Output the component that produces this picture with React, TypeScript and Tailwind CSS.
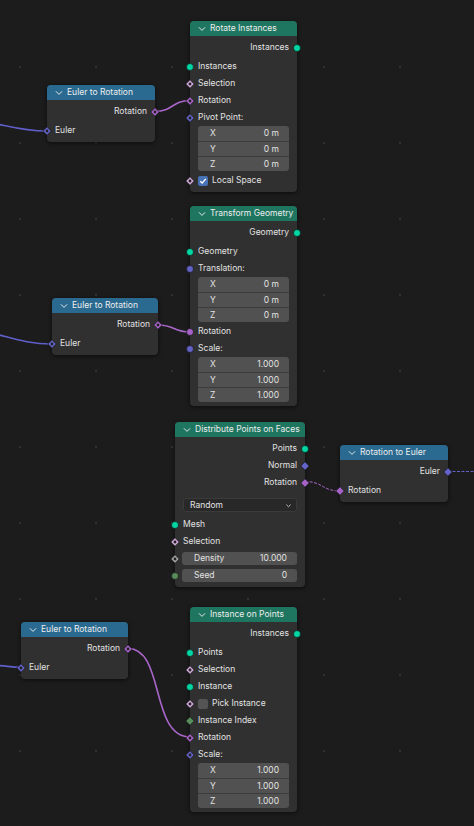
import React from 'react';

type Shape = 'circle' | 'diamond' | 'dot';

const col = {
  geo: '#00d6a3',
  vec: '#6363c7',
  rot: '#a663c7',
  bool: '#cca6d6',
  float: '#a1a1a1',
  int: '#598c5c',
};

function Socket({ color, shape, side }: { color: string; shape: Shape; side: 'in' | 'out' }) {
  const pos = side === 'in' ? '-left-[5px]' : '-right-[5px]';
  return (
    <svg
      width="10"
      height="10"
      viewBox="0 0 10 10"
      className={`absolute top-1/2 -translate-y-1/2 ${pos}`}
    >
      {shape === 'circle' ? (
        <circle cx="5" cy="5" r="3.5" fill={color} stroke="#141414" strokeWidth="0.7" />
      ) : (
        <polygon points="5,0.8 9.2,5 5,9.2 0.8,5" fill={color} stroke="#141414" strokeWidth="0.6" />
      )}
      {shape === 'dot' && <circle cx="5" cy="5" r="1.4" fill="#222" />}
    </svg>
  );
}

function Chevron() {
  return (
    <svg width="8" height="8" viewBox="0 0 8 8" className="shrink-0">
      <polyline points="1.2,2.6 4,5.4 6.8,2.6" fill="none" stroke="#e6e6e6" strokeWidth="1" strokeLinecap="round" />
    </svg>
  );
}

function Node({
  pos,
  title,
  head,
  children,
}: {
  pos: string;
  title: string;
  head: 'geo' | 'conv';
  children: React.ReactNode;
}) {
  const hc = head === 'geo' ? 'bg-[#1e7660]' : 'bg-[#2a6a90]';
  return (
    <div className={`absolute rounded-[4px] bg-[#303030] shadow-[0_1px_4px_rgba(0,0,0,0.6)] ${pos}`}>
      <div className={`flex h-[15px] items-center gap-[4px] rounded-t-[4px] pl-[8px] text-[#ededed] ${hc}`}>
        <Chevron />
        <span className="whitespace-nowrap">{title}</span>
      </div>
      <div className="flex flex-col pt-[3px] pb-[3px]">{children}</div>
    </div>
  );
}

function Out({ label, color, shape }: { label: string; color: string; shape: Shape }) {
  return (
    <div className="relative flex h-[17px] items-center justify-end pr-[8px]">
      <span>{label}</span>
      <Socket color={color} shape={shape} side="out" />
    </div>
  );
}

function In({
  label,
  color,
  shape,
  children,
}: {
  label?: string;
  color: string;
  shape: Shape;
  children?: React.ReactNode;
}) {
  return (
    <div className="relative flex h-[17px] items-center pl-[8px]">
      {children ?? <span>{label}</span>}
      <Socket color={color} shape={shape} side="in" />
    </div>
  );
}

function Gap() {
  return <div className="h-[2px]" />;
}

function Vec({ vals }: { vals: string[] }) {
  const names = ['X', 'Y', 'Z'];
  return (
    <div className="mx-[8px] mb-[1px] flex flex-col overflow-hidden rounded-[3px]">
      {vals.map((v, i) => (
        <div
          key={i}
          className={`flex h-[15px] items-center justify-between bg-[#515151] pr-[10px] pl-[12px] ${
            i > 0 ? 'border-t border-[#3b3b3b]' : ''
          }`}
        >
          <span>{names[i]}</span>
          <span>{v}</span>
        </div>
      ))}
    </div>
  );
}

function Field({ label, value }: { label: string; value: string }) {
  return (
    <div className="-ml-[1px] mr-[8px] flex h-[13px] flex-1 items-center justify-between rounded-[3px] bg-[#515151] pr-[10px] pl-[12px]">
      <span>{label}</span>
      <span>{value}</span>
    </div>
  );
}

function Check({ on, label }: { on: boolean; label: string }) {
  return (
    <div className="flex items-center gap-[4px]">
      <div
        className={`flex h-[10px] w-[10px] items-center justify-center rounded-[2px] ${
          on ? 'bg-[#4772b3]' : 'bg-[#545454]'
        }`}
      >
        {on && (
          <svg width="8" height="8" viewBox="0 0 8 8">
            <polyline points="1.3,4.2 3.2,6 6.8,1.8" fill="none" stroke="#fff" strokeWidth="1.3" />
          </svg>
        )}
      </div>
      <span>{label}</span>
    </div>
  );
}

function EulerToRot({ pos }: { pos: string }) {
  return (
    <Node pos={pos} title="Euler to Rotation" head="conv">
      <Out label="Rotation" color={col.rot} shape="dot" />
      <Gap />
      <In label="Euler" color={col.vec} shape="dot" />
    </Node>
  );
}

export default function App() {
  return (
    <div
      className="relative h-[826px] w-[474px] overflow-hidden bg-[#1c1c1c] bg-[radial-gradient(circle,#303030_1.1px,transparent_1.6px)] bg-[length:76px_76px] bg-[position:-18px_29px] text-[8.5px] leading-none text-[#e2e2e2]"
      style={{ fontFamily: 'Inter, "DejaVu Sans", sans-serif' }}
    >
      <svg className="absolute inset-0" width="474" height="826" fill="none">
        <path d="M-40 119 C 0 121, 12 131, 47 131" stroke="#5f5fcb" strokeWidth="1.6" />
        <path d="M155 111.5 C 173 111.5, 172 100.5, 190 100.5" stroke="#a866c9" strokeWidth="1.6" />
        <path d="M-40 328 C 0 331, 16 344, 52 344" stroke="#5f5fcb" strokeWidth="1.6" />
        <path d="M158 325 C 175 325, 173 332, 190 332" stroke="#a866c9" strokeWidth="1.6" />
        <path d="M305 481.5 C 323 481.5, 322 491, 340 491" stroke="#a866c9" strokeWidth="1" strokeDasharray="3 1.5" />
        <path d="M448 471.5 L 480 471.5" stroke="#6363c7" strokeWidth="1" strokeDasharray="3 1.5" />
        <path d="M-10 665 C 6 665.5, 10 667.3, 21 667.3" stroke="#5f5fcb" strokeWidth="1.6" />
        <path d="M128 648.5 C 165 648.5, 150 737, 190 737" stroke="#a866c9" strokeWidth="1.6" />
      </svg>

      <EulerToRot pos="left-[47px] top-[85px] w-[108px]" />

      <Node pos="left-[190px] top-[21px] w-[107px]" title="Rotate Instances" head="geo">
        <Out label="Instances" color={col.geo} shape="circle" />
        <Gap />
        <In label="Instances" color={col.geo} shape="circle" />
        <In label="Selection" color={col.bool} shape="dot" />
        <In label="Rotation" color={col.rot} shape="dot" />
        <In label="Pivot Point:" color={col.vec} shape="dot" />
        <Vec vals={['0 m', '0 m', '0 m']} />
        <In color={col.bool} shape="dot">
          <Check on label="Local Space" />
        </In>
      </Node>

      <EulerToRot pos="left-[52px] top-[298px] w-[106px]" />

      <Node pos="left-[190px] top-[206px] w-[107px]" title="Transform Geometry" head="geo">
        <Out label="Geometry" color={col.geo} shape="circle" />
        <Gap />
        <In label="Geometry" color={col.geo} shape="circle" />
        <In label="Translation:" color={col.vec} shape="circle" />
        <Vec vals={['0 m', '0 m', '0 m']} />
        <In label="Rotation" color={col.rot} shape="circle" />
        <In label="Scale:" color={col.vec} shape="circle" />
        <Vec vals={['1.000', '1.000', '1.000']} />
      </Node>

      <Node pos="left-[175px] top-[422px] w-[130px]" title="Distribute Points on Faces" head="geo">
        <Out label="Points" color={col.geo} shape="circle" />
        <Out label="Normal" color={col.vec} shape="diamond" />
        <Out label="Rotation" color={col.rot} shape="diamond" />
        <div className="mx-[8px] mt-[7px] mb-[4px] flex h-[14px] items-center justify-between rounded-[3px] border border-[#3a3a3a] bg-[#282828] pr-[4px] pl-[6px]">
          <span>Random</span>
          <svg width="7" height="7" viewBox="0 0 8 8">
            <polyline points="1.5,3 4,5.4 6.5,3" fill="none" stroke="#cfcfcf" strokeWidth="1" />
          </svg>
        </div>
        <In label="Mesh" color={col.geo} shape="circle" />
        <In label="Selection" color={col.bool} shape="dot" />
        <In color={col.float} shape="dot">
          <Field label="Density" value="10.000" />
        </In>
        <In color={col.int} shape="circle">
          <Field label="Seed" value="0" />
        </In>
      </Node>

      <Node pos="left-[340px] top-[445px] w-[108px]" title="Rotation to Euler" head="conv">
        <Out label="Euler" color={col.vec} shape="diamond" />
        <Gap />
        <In label="Rotation" color={col.rot} shape="diamond" />
      </Node>

      <EulerToRot pos="left-[21px] top-[622px] w-[107px]" />

      <Node pos="left-[190px] top-[607px] w-[107px]" title="Instance on Points" head="geo">
        <Out label="Instances" color={col.geo} shape="circle" />
        <Gap />
        <In label="Points" color={col.geo} shape="circle" />
        <In label="Selection" color={col.bool} shape="dot" />
        <In label="Instance" color={col.geo} shape="circle" />
        <In color={col.bool} shape="dot">
          <Check on={false} label="Pick Instance" />
        </In>
        <In label="Instance Index" color={col.int} shape="diamond" />
        <In label="Rotation" color={col.rot} shape="dot" />
        <In label="Scale:" color={col.vec} shape="dot" />
        <Vec vals={['1.000', '1.000', '1.000']} />
      </Node>
    </div>
  );
}
